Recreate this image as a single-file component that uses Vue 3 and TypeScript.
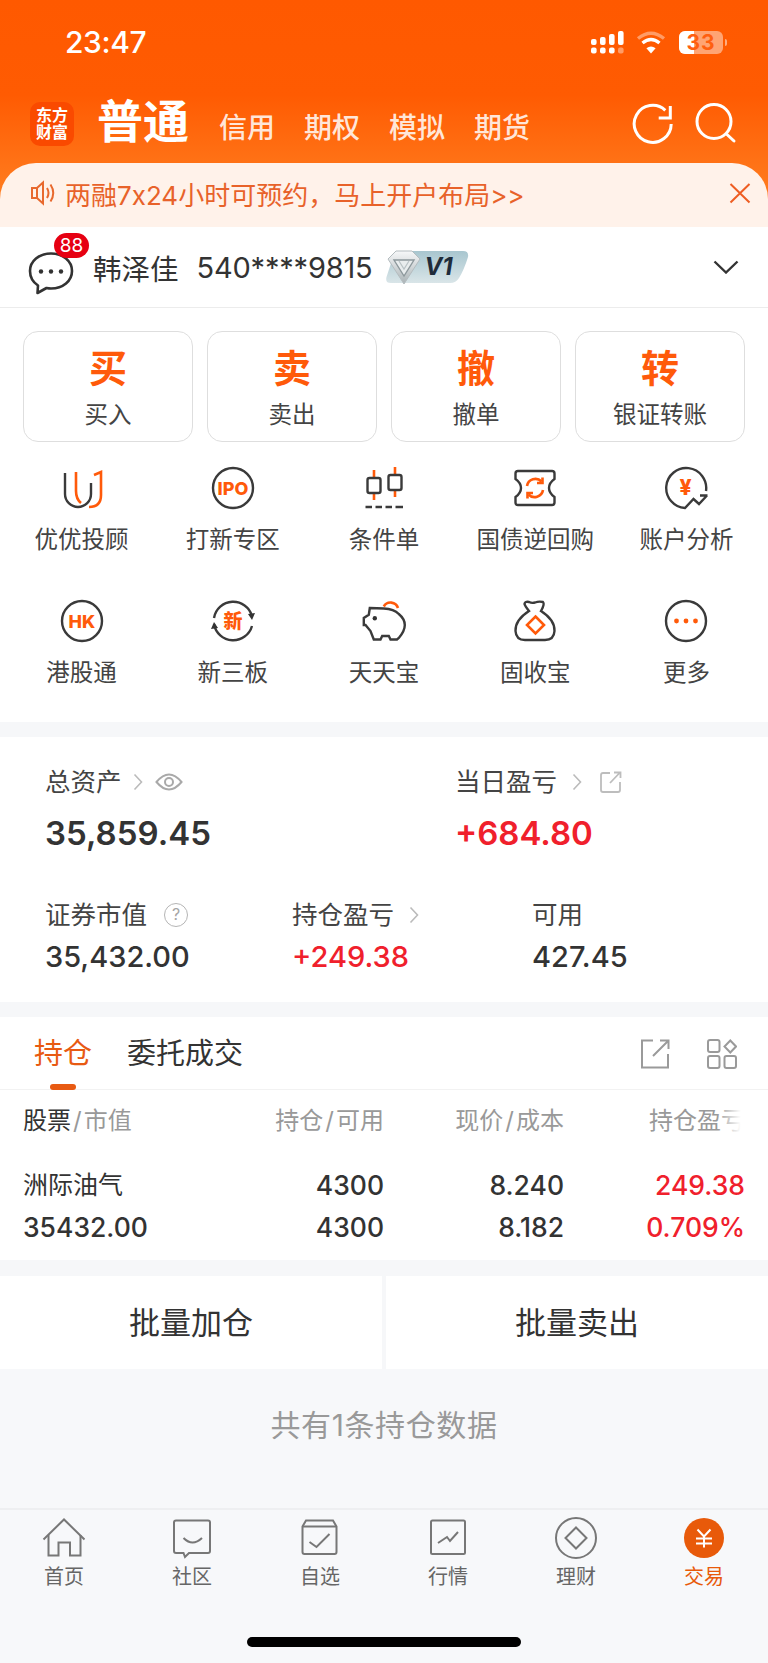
<script setup lang="ts">
const subTabs = ['信用', '期权', '模拟', '期货']

const actions = [
  { big: '买', label: '买入' },
  { big: '卖', label: '卖出' },
  { big: '撤', label: '撤单' },
  { big: '转', label: '银证转账' }
]

const shortcuts = [
  { icon: 'youyou', label: '优优投顾' },
  { icon: 'ipo', label: '打新专区' },
  { icon: 'candle', label: '条件单' },
  { icon: 'ticket', label: '国债逆回购' },
  { icon: 'analysis', label: '账户分析' },
  { icon: 'hk', label: '港股通' },
  { icon: 'xsb', label: '新三板' },
  { icon: 'pig', label: '天天宝' },
  { icon: 'bag', label: '固收宝' },
  { icon: 'more', label: '更多' }
]

const navItems = [
  { icon: 'home', label: '首页' },
  { icon: 'community', label: '社区' },
  { icon: 'watch', label: '自选' },
  { icon: 'market', label: '行情' },
  { icon: 'finance', label: '理财' },
  { icon: 'trade', label: '交易' }
]
</script>

<template>
  <div class="page">
    <header class="top">
      <div class="status-bar">
        <span class="time">23:47</span>
        <div class="status-icons">
          <svg class="signal" width="34" height="24" viewBox="0 0 34 24" fill="#fff">
            <rect x="1" y="9" width="5.6" height="6" rx="2" />
            <rect x="10" y="7" width="5.6" height="8" rx="2" />
            <rect x="19" y="4" width="5.6" height="11" rx="2" />
            <rect x="28" y="1" width="5.6" height="14" rx="2" />
            <rect x="1" y="17.5" width="5.6" height="6" rx="2" />
            <rect x="10" y="17.5" width="5.6" height="6" rx="2" />
            <rect x="19" y="17.5" width="5.6" height="6" rx="2" />
            <rect x="28" y="17.5" width="5.6" height="6" rx="2" opacity="0.4" />
          </svg>
          <svg class="wifi" width="30" height="24" viewBox="0 0 30 24" fill="none" stroke-width="3.4">
            <path d="M2 8.5 Q15 -2 28 8.5" stroke="#fff" stroke-opacity="0.4" />
            <path d="M6.5 13 Q15 6 23.5 13" stroke="#fff" />
            <path d="M15 23.5 L10.4 18.2 Q15 14.6 19.6 18.2 Z" fill="#fff" stroke="none" />
          </svg>
          <div class="battery">
            <span class="battery-fill"></span>
            <span class="battery-num">33</span>
          </div>
        </div>
      </div>

      <div class="nav">
        <div class="logo">
          <span>东方</span>
          <span>财富</span>
        </div>
        <span class="nav-main">普通</span>
        <div class="nav-tabs">
          <span v-for="t in subTabs" :key="t">{{ t }}</span>
        </div>
        <div class="nav-actions">
          <svg width="44" height="44" viewBox="0 0 44 44" fill="none" stroke="#fff" stroke-width="3">
            <path d="M34.3 8.3 A18.5 18.5 0 1 0 40.2 22" />
            <path d="M39.3 4 V16 H27.7" />
          </svg>
          <svg width="44" height="44" viewBox="0 0 44 44" fill="none" stroke="#fff" stroke-width="3">
            <circle cx="21" cy="19.5" r="17" />
            <path d="M34 32.5 L41 39" stroke-linecap="round" />
          </svg>
        </div>
      </div>

      <div class="banner">
        <svg class="speaker" width="26" height="26" viewBox="0 0 26 26" fill="none" stroke="#e8692e" stroke-width="2">
          <path d="M2 8 H7 L13 2.5 V23.5 L7 18 H2 Z" />
          <path d="M7 8 V18" />
          <path d="M17 8 Q20 13 17 18" />
          <path d="M20.5 4.5 Q26 13 20.5 21.5" />
        </svg>
        <span class="banner-text">两融7x24小时可预约，马上开户布局&gt;&gt;</span>
        <svg width="22" height="22" viewBox="0 0 22 22" fill="none" stroke="#ee5d22" stroke-width="2">
          <path d="M1.5 2 L20.5 20.5 M20.5 2 L1.5 20.5" />
        </svg>
      </div>
    </header>

    <section class="account">
      <div class="chat">
        <svg width="48" height="48" viewBox="0 0 48 48" fill="none" stroke="#333" stroke-width="2.6">
          <path d="M24 5.5 C12 5.5 3 13 3 23 C3 29.5 6.5 34.5 11 37.5 L10.5 45 L19.5 40 C21 40.3 22.5 40.5 24 40.5 C36 40.5 45 33 45 23 C45 13 36 5.5 24 5.5 Z" stroke-linejoin="round" />
          <circle cx="14" cy="23.5" r="2.2" fill="#333" stroke="none" />
          <circle cx="24" cy="23.5" r="2.2" fill="#333" stroke="none" />
          <circle cx="34" cy="23.5" r="2.2" fill="#333" stroke="none" />
        </svg>
        <span class="badge">88</span>
      </div>
      <span class="user-name">韩泽佳</span>
      <span class="user-no">540****9815</span>
      <div class="vip">
        <svg width="84" height="34" viewBox="0 0 84 34" fill="none">
          <defs>
            <linearGradient id="vipBg" x1="0" y1="0" x2="0" y2="1">
              <stop offset="0" stop-color="#a8c6cf" />
              <stop offset="1" stop-color="#d9e5e8" />
            </linearGradient>
            <linearGradient id="gem" x1="0" y1="0" x2="0" y2="1">
              <stop offset="0" stop-color="#f7f8f9" />
              <stop offset="1" stop-color="#a9b2b5" />
            </linearGradient>
          </defs>
          <path d="M14 1 H78 Q84 1 83 7 Q79 20 74 28 Q71 33 65 33 H6 Q0 33 1.5 27 L8 7 Q10 1 14 1 Z" fill="url(#vipBg)" />
          <path d="M3 9 L11 1 H27 L35 9 L19 34 Z" fill="url(#gem)" stroke="#b4bcbf" stroke-width="1" />
          <path d="M9 10 H29 L19 26 Z" fill="#e9edee" stroke="#8d989c" stroke-width="1.4" />
          <path d="M14 11 L19 19 L24 11" stroke="#b9c2c5" stroke-width="1.2" />
        </svg>
        <span class="vip-text">V1</span>
      </div>
      <svg class="chevron" width="26" height="14" viewBox="0 0 26 14" fill="none" stroke="#333" stroke-width="2.4">
        <path d="M1.5 1.5 L13 12.5 L24.5 1.5" />
      </svg>
    </section>

    <section class="quick">
      <div class="action-row">
        <div v-for="a in actions" :key="a.big" class="action">
          <span class="action-big">{{ a.big }}</span>
          <span class="action-label">{{ a.label }}</span>
        </div>
      </div>
      <div class="shortcut-grid">
        <div v-for="s in shortcuts" :key="s.label" class="shortcut">
          <svg class="sc-icon" width="44" height="44" viewBox="0 0 44 44" fill="none">
            <template v-if="s.icon === 'youyou'">
              <path class="dk" d="M5 7 V28 a13 13 0 0 0 26 0 V17" />
              <path class="og" d="M16 6 V25 q0 8 5 12" />
              <path class="og" d="M34 9 l7 -3 V29 q0 12 -12 12" />
            </template>
            <template v-else-if="s.icon === 'ipo'">
              <circle class="dk" cx="22" cy="22" r="20" />
              <text x="22" y="28.5" text-anchor="middle" class="sc-text" font-size="18">IPO</text>
            </template>
            <template v-else-if="s.icon === 'candle'">
              <path class="og" d="M12 4 V12 M12 27 V34 M33 1 V9 M33 24 V31" />
              <rect class="dk" x="5.5" y="12" width="13" height="15" rx="2" />
              <rect class="dk" x="26.5" y="9" width="13" height="15" rx="2" />
              <path class="dk" d="M3.5 41 H10 M13.5 41 H20 M23.5 41 H30 M33.5 41 H41" />
            </template>
            <template v-else-if="s.icon === 'ticket'">
              <path class="dk" d="M5 5 H39 Q41.5 5 41.5 7.5 V13 Q36 17 36 22 Q36 27 41.5 31 V36.5 Q41.5 39 39 39 H5 Q2.5 39 2.5 36.5 V31 Q8 27 8 22 Q8 17 2.5 13 V7.5 Q2.5 5 5 5 Z" />
              <path class="og" d="M14 20 A8.5 8.5 0 0 1 28.5 15.5 M30 24 A8.5 8.5 0 0 1 15.5 28.5" />
              <path class="og" d="M29.5 11.5 V17 H24 M14.5 32.5 V27 H20" />
            </template>
            <template v-else-if="s.icon === 'analysis'">
              <path class="dk" d="M42 25 A20 20 0 1 0 21 42 L29.5 33 L35 38 L43 29.5 M36 29.5 H43.5" />
              <text x="21.5" y="29" text-anchor="middle" class="sc-text" font-size="21">¥</text>
            </template>
            <template v-else-if="s.icon === 'hk'">
              <circle class="dk" cx="22" cy="22" r="20" />
              <text x="22" y="28.5" text-anchor="middle" class="sc-text" font-size="18">HK</text>
            </template>
            <template v-else-if="s.icon === 'xsb'">
              <path class="dk" d="M3 19 A19.5 19.5 0 0 1 41 17 M41 27 A19.5 19.5 0 0 1 3 25" />
              <path d="M37 15 L44 14 L41 21 Z M7 29 L0 30 L3 23 Z" fill="#333" />
              <text x="22" y="29" text-anchor="middle" class="sc-text" font-size="19">新</text>
            </template>
            <template v-else-if="s.icon === 'pig'">
              <path class="og" d="M21.8 7.5 A7.8 7.8 0 0 1 36 9" />
              <path class="dk" d="M7.8 9 L21.8 9.5 Q32 10 36.8 15 Q42.8 20 42.8 26 Q42.8 32 36.8 39 L35 40.5 H28.5 L26.8 37 H20.2 L18.5 40.5 H11.8 L8.5 32 L3.5 26 H1.8 V19 L6.8 15.7 Z" />
              <circle cx="12.8" cy="19.3" r="2.2" fill="#333" />
            </template>
            <template v-else-if="s.icon === 'bag'">
              <path class="dk" d="M16 12 Q12 7 11.5 5 Q12 2 16 3 Q19 4.5 22 3.5 Q26 2 30 3 Q32 5 28 12 Q42 21 41.5 32 Q41 41 32 41 H12 Q3 41 2.5 32 Q2 21 16 12 Z" />
              <path class="og" d="M22.5 17.5 L31 26 L22.5 34.5 L14 26 Z" />
            </template>
            <template v-else>
              <circle class="dk" cx="22" cy="22" r="20" />
              <circle cx="12.5" cy="22" r="2.4" fill="#ff5a0a" />
              <circle cx="22" cy="22" r="2.4" fill="#ff5a0a" />
              <circle cx="31.5" cy="22" r="2.4" fill="#ff5a0a" />
            </template>
          </svg>
          <span class="sc-label">{{ s.label }}</span>
        </div>
      </div>
    </section>

    <section class="assets">
      <div class="asset-top">
        <div>
          <div class="asset-label">
            <span>总资产</span>
            <svg class="arrow tight" width="10" height="18" viewBox="0 0 10 18" fill="none" stroke="#bbb" stroke-width="1.6"><path d="M1.5 1.5 L8.5 9 L1.5 16.5" /></svg>
            <svg class="eye" width="28" height="20" viewBox="0 0 28 20" fill="none" stroke="#a9a9a9" stroke-width="2">
              <path d="M1.5 10 Q14 -5 26.5 10 Q14 25 1.5 10 Z" />
              <circle cx="14" cy="10" r="4" />
            </svg>
          </div>
          <div class="value-lg">35,859.45</div>
        </div>
        <div>
          <div class="asset-label">
            <span>当日盈亏</span>
            <svg class="arrow" width="10" height="18" viewBox="0 0 10 18" fill="none" stroke="#bbb" stroke-width="1.6"><path d="M1.5 1.5 L8.5 9 L1.5 16.5" /></svg>
            <svg class="ext" width="22" height="22" viewBox="0 0 22 22" fill="none" stroke="#bdbdbd" stroke-width="1.8">
              <path d="M10 2 H3 Q1 2 1 4 V19 Q1 21 3 21 H18 Q20 21 20 19 V11" />
              <path d="M10 12 L20 1.5 M14 1.5 H20.5 V7" />
            </svg>
          </div>
          <div class="value-lg up">+684.80</div>
        </div>
      </div>
      <div class="asset-bottom">
        <div>
          <div class="asset-label">
            <span>证券市值</span>
            <span class="help">?</span>
          </div>
          <div class="value-md">35,432.00</div>
        </div>
        <div>
          <div class="asset-label">
            <span>持仓盈亏</span>
            <svg class="arrow" width="10" height="18" viewBox="0 0 10 18" fill="none" stroke="#bbb" stroke-width="1.6"><path d="M1.5 1.5 L8.5 9 L1.5 16.5" /></svg>
          </div>
          <div class="value-md up">+249.38</div>
        </div>
        <div>
          <div class="asset-label"><span>可用</span></div>
          <div class="value-md">427.45</div>
        </div>
      </div>
    </section>

    <section class="holdings">
      <div class="tabs">
        <span class="tab active">持仓</span>
        <span class="tab">委托成交</span>
        <div class="tab-icons">
          <svg width="30" height="30" viewBox="0 0 30 30" fill="none" stroke="#9a9a9a" stroke-width="2">
            <path d="M13 1.5 H2 V28.5 H28 V15" />
            <path d="M13 17 L28.5 1.5 M20 1.5 H28.5 V10" />
          </svg>
          <svg width="30" height="30" viewBox="0 0 30 30" fill="none" stroke="#9a9a9a" stroke-width="2">
            <rect x="1" y="1" width="11.5" height="12" rx="2" />
            <rect x="1" y="17" width="11.5" height="12" rx="2" />
            <rect x="17.5" y="17" width="11.5" height="12" rx="2" />
            <path d="M23.3 1.5 L29 7.5 L23.3 13.5 L17.5 7.5 Z" />
          </svg>
        </div>
      </div>
      <div class="table-head">
        <span><b>股票</b><i>/</i>市值</span>
        <span class="r">持仓<i>/</i>可用</span>
        <span class="r">现价<i>/</i>成本</span>
        <span class="r last-head">持仓盈亏</span>
      </div>
      <div class="table-body">
        <span class="cn">洲际油气</span>
        <span class="r">4300</span>
        <span class="r">8.240</span>
        <span class="r up">249.38</span>
        <span>35432.00</span>
        <span class="r">4300</span>
        <span class="r">8.182</span>
        <span class="r up">0.709%</span>
      </div>
    </section>

    <div class="batch">
      <div class="batch-btn">批量加仓</div>
      <div class="batch-btn">批量卖出</div>
    </div>

    <div class="summary">共有1条持仓数据</div>

    <footer class="tabbar">
      <div class="tabbar-row">
        <div v-for="n in navItems" :key="n.label" class="tabbar-item" :class="{ current: n.icon === 'trade' }">
          <svg width="44" height="44" viewBox="0 0 44 44" fill="none" stroke="#777" stroke-width="2">
            <template v-if="n.icon === 'home'">
              <path d="M1.5 24.5 L22 4.5 L42.5 24.5" />
              <path d="M6.5 20 V40.5 H16.5 V27.5 H28 V40.5 H38.5 V20" />
            </template>
            <template v-else-if="n.icon === 'community'">
              <path d="M6 5.5 H38 Q40 5.5 40 7.5 V36 Q40 38 38 38 H19 L15 42 L13.5 38 H6 Q4 38 4 36 V7.5 Q4 5.5 6 5.5 Z" />
              <path d="M13.5 23 Q22.5 32 32 23" />
            </template>
            <template v-else-if="n.icon === 'watch'">
              <path d="M4.5 11.5 L8 5.5 H35 L38.5 11.5 V37 Q38.5 39 36.5 39 H6.5 Q4.5 39 4.5 37 Z" />
              <path d="M4.5 11.5 H38.5" />
              <path d="M11.5 27 L18.5 32 L31.5 19" />
            </template>
            <template v-else-if="n.icon === 'market'">
              <rect x="5" y="5.5" width="34" height="33.5" rx="1.5" />
              <path d="M12 28 L21 22 L24 26 L32 17" />
            </template>
            <template v-else-if="n.icon === 'finance'">
              <circle cx="22" cy="23" r="20" />
              <path d="M22 12.5 L32.5 23 L22 33.5 L11.5 23 Z" />
            </template>
            <template v-else>
              <circle cx="22" cy="23" r="20" fill="#e85a0a" stroke="none" />
              <path d="M15.5 14.5 L22 21.5 L28.5 14.5 M14 23.5 H30 M14 28.5 H30 M22 21.5 V32.5" stroke="#fff" />
            </template>
          </svg>
          <span>{{ n.label }}</span>
        </div>
      </div>
      <div class="home-bar"></div>
    </footer>
  </div>
</template>

<style>
body {
  margin: 0;
  background: #f7f8fa;
}
</style>

<style scoped>
.page {
  width: 768px;
  height: 1663px;
  display: flex;
  flex-direction: column;
  overflow: hidden;
  background: #f6f7f9;
  color: #333;
  font-family: Inter, "Noto Sans CJK SC", "Noto Sans", sans-serif;
}

.top {
  height: 227px;
  display: flex;
  flex-direction: column;
  background: linear-gradient(180deg, #ff5900 0, #ff5b02 95px, #ff7b1e 190px);
  color: #fff;
}

.status-bar {
  height: 84px;
  flex-shrink: 0;
  padding: 0 45px 0 65px;
  display: flex;
  align-items: center;
  justify-content: space-between;
}

.time {
  font-size: 30px;
  font-weight: 500;
  letter-spacing: -0.4px;
}

.status-icons {
  display: flex;
  align-items: center;
}

.signal {
  margin-right: 12px;
}

.wifi {
  margin-right: 13px;
}

.battery {
  position: relative;
  width: 44px;
  height: 23px;
  border-radius: 6px;
  background: rgba(255, 255, 255, 0.45);
}

.battery::after {
  content: '';
  position: absolute;
  right: -4px;
  top: 8px;
  width: 2px;
  height: 7px;
  border-radius: 0 2px 2px 0;
  background: rgba(255, 255, 255, 0.5);
}

.battery-fill {
  position: absolute;
  left: 0;
  top: 0;
  bottom: 0;
  width: 15px;
  background: #fff;
  border-radius: 6px 0 0 6px;
}

.battery-num {
  position: absolute;
  inset: 0;
  text-align: center;
  font-size: 21px;
  line-height: 23px;
  font-weight: 700;
  letter-spacing: 1px;
  color: #ff5f10;
}

.nav {
  height: 79px;
  flex-shrink: 0;
  padding: 0 31px 5px 30px;
  display: flex;
  align-items: center;
  box-sizing: border-box;
}

.logo {
  width: 44px;
  height: 44px;
  margin-top: 5px;
  flex-shrink: 0;
  border-radius: 10px;
  background: #fa4a00;
  display: flex;
  flex-direction: column;
  align-items: center;
  justify-content: center;
  font-size: 16px;
  line-height: 17px;
  font-weight: 700;
}

.nav-main {
  margin-left: 23px;
  font-size: 46px;
  line-height: 52px;
  font-weight: 700;
}

.nav-tabs {
  margin: 14px 0 0 30px;
  display: flex;
  gap: 29px;
  font-size: 28px;
  line-height: 36px;
  font-weight: 500;
  color: rgba(255, 255, 255, 0.85);
}

.nav-actions {
  margin: 5px 0 0 auto;
  display: flex;
  gap: 18px;
}

.banner {
  flex: 1;
  padding: 0 17px 4px 30px;
  display: flex;
  align-items: center;
  background: #fff2ea;
  border-radius: 36px 36px 0 0;
}

.banner-text {
  flex: 1;
  margin-left: 9px;
  font-size: 26px;
  color: #e8622a;
}

.account {
  height: 80px;
  flex-shrink: 0;
  padding: 0 29px 0 27px;
  display: flex;
  align-items: center;
  background: #fff;
  border-bottom: 1px solid #ececec;
}

.chat {
  position: relative;
  width: 48px;
  height: 48px;
  margin-top: 10px;
  flex-shrink: 0;
}

.badge {
  position: absolute;
  left: 27px;
  top: -15px;
  width: 35px;
  height: 25px;
  border-radius: 13px;
  background: #e60012;
  color: #fff;
  font-size: 19px;
  line-height: 25px;
  text-align: center;
}

.user-name {
  margin-left: 18px;
  font-size: 28.5px;
  color: #333;
}

.user-no {
  margin-left: 18px;
  font-size: 29px;
  color: #333;
  letter-spacing: -0.2px;
}

.vip {
  position: relative;
  width: 84px;
  height: 34px;
  margin-left: 13px;
  flex-shrink: 0;
}

.vip-text {
  position: absolute;
  left: 39px;
  top: 0;
  font-size: 24px;
  line-height: 33px;
  font-weight: 700;
  font-style: italic;
  color: #1f2c3a;
}

.chevron {
  margin-left: auto;
}

.quick {
  height: 414px;
  flex-shrink: 0;
  box-sizing: border-box;
  padding-top: 23px;
  background: #fff;
}

.action-row {
  padding: 0 23px;
  display: grid;
  grid-template-columns: repeat(4, 1fr);
  gap: 14px;
}

.action {
  height: 111px;
  box-sizing: border-box;
  border: 1.5px solid #dedede;
  border-radius: 15px;
  display: flex;
  flex-direction: column;
  align-items: center;
}

.action-big {
  margin-top: 12px;
  font-size: 38px;
  line-height: 48px;
  font-weight: 700;
  color: #ff5a0a;
}

.action-label {
  margin-top: 7px;
  font-size: 23.5px;
  line-height: 32px;
  color: #444;
}

.shortcut-grid {
  margin-top: 24px;
  padding: 0 6px;
  display: grid;
  grid-template-columns: repeat(5, 1fr);
  row-gap: 43px;
}

.shortcut {
  display: flex;
  flex-direction: column;
  align-items: center;
}

.dk {
  stroke: #3a3a3a;
  stroke-width: 2.4;
}

.og {
  stroke: #ff5a0a;
  stroke-width: 2.6;
}

.sc-text {
  fill: #ff5a0a;
  font-weight: 800;
}

.sc-label {
  margin-top: 14px;
  font-size: 23.5px;
  line-height: 32px;
  color: #444;
  white-space: nowrap;
}

.assets {
  height: 265px;
  margin-top: 15px;
  flex-shrink: 0;
  box-sizing: border-box;
  padding: 28px 0 0 45px;
  background: #fff;
}

.asset-top {
  display: grid;
  grid-template-columns: 410px 1fr;
}

.asset-bottom {
  margin-top: 43px;
  display: grid;
  grid-template-columns: 247px 240px 1fr;
}

.asset-label {
  height: 34px;
  display: flex;
  align-items: center;
  font-size: 25.5px;
  line-height: 34px;
  color: #444;
}

.arrow {
  margin-left: 15px;
}

.arrow.tight {
  margin-left: 11px;
}

.eye {
  margin-left: 12px;
}

.ext {
  margin-left: 18px;
}

.help {
  width: 24px;
  height: 24px;
  margin-left: 17px;
  box-sizing: border-box;
  border: 1.8px solid #b5b5b5;
  border-radius: 50%;
  font-size: 16px;
  line-height: 20px;
  text-align: center;
  color: #a5a5a5;
}

.value-lg {
  margin-top: 12px;
  font-size: 33px;
  line-height: 44px;
  font-weight: 600;
  color: #333;
}

.value-md {
  margin-top: 7px;
  font-size: 29px;
  line-height: 36px;
  font-weight: 500;
  color: #333;
}

.value-lg.up,
.value-md.up,
.up {
  color: #f0202c;
}

.holdings {
  height: 243px;
  margin-top: 15px;
  flex-shrink: 0;
  background: #fff;
}

.tabs {
  height: 73px;
  padding: 2px 31px 0 34px;
  box-sizing: border-box;
  display: flex;
  align-items: center;
  gap: 35px;
  border-bottom: 1px solid #f2f2f2;
}

.tab {
  position: relative;
  font-size: 29px;
  line-height: 40px;
  color: #333;
}

.tab.active {
  color: #e85a12;
}

.tab.active::after {
  content: '';
  position: absolute;
  left: 16px;
  bottom: -16px;
  width: 26px;
  height: 6px;
  border-radius: 3px;
  background: #e85a12;
}

.tab-icons {
  margin-left: auto;
  display: flex;
  gap: 37px;
}

.table-head,
.table-body {
  padding: 0 23px;
  display: grid;
  grid-template-columns: 201px 160px 180px 181px;
}

.table-head {
  height: 56px;
  align-items: center;
  font-size: 24px;
  color: #999;
  white-space: nowrap;
}

.table-head b {
  font-weight: 400;
  color: #333;
}

.table-head i {
  margin: 0 2px;
  font-style: normal;
}

.r {
  text-align: right;
}

.last-head {
  position: relative;
}

.last-head::after {
  content: '';
  position: absolute;
  right: 0;
  top: 0;
  bottom: 0;
  width: 28px;
  background: linear-gradient(90deg, rgba(255, 255, 255, 0), #fff 85%);
}

.table-body {
  padding-top: 18px;
  font-size: 26.5px;
  line-height: 42px;
  font-weight: 500;
  color: #333;
}

.cn {
  font-size: 25px;
  font-weight: 400;
}

.batch {
  height: 93px;
  margin-top: 16px;
  flex-shrink: 0;
  display: flex;
  gap: 4px;
}

.batch-btn {
  flex: 1;
  background: #fff;
  font-size: 31px;
  line-height: 93px;
  text-align: center;
  color: #333;
}

.summary {
  flex: 1;
  font-size: 30px;
  line-height: 112px;
  letter-spacing: 0.6px;
  text-align: center;
  color: #999;
  background: #f7f8fa;
}

.tabbar {
  height: 155px;
  flex-shrink: 0;
  box-sizing: border-box;
  padding-top: 5px;
  background: #f7f8fa;
  border-top: 2px solid #eeeff1;
}

.tabbar-row {
  display: grid;
  grid-template-columns: repeat(6, 1fr);
}

.tabbar-item {
  display: flex;
  flex-direction: column;
  align-items: center;
  font-size: 20px;
  line-height: 28px;
  color: #666;
}

.tabbar-item span {
  margin-top: 4px;
}

.tabbar-item.current {
  color: #e85a0a;
}

.home-bar {
  width: 274px;
  height: 10px;
  margin: 46px auto 0;
  border-radius: 5px;
  background: #000;
}
</style>
